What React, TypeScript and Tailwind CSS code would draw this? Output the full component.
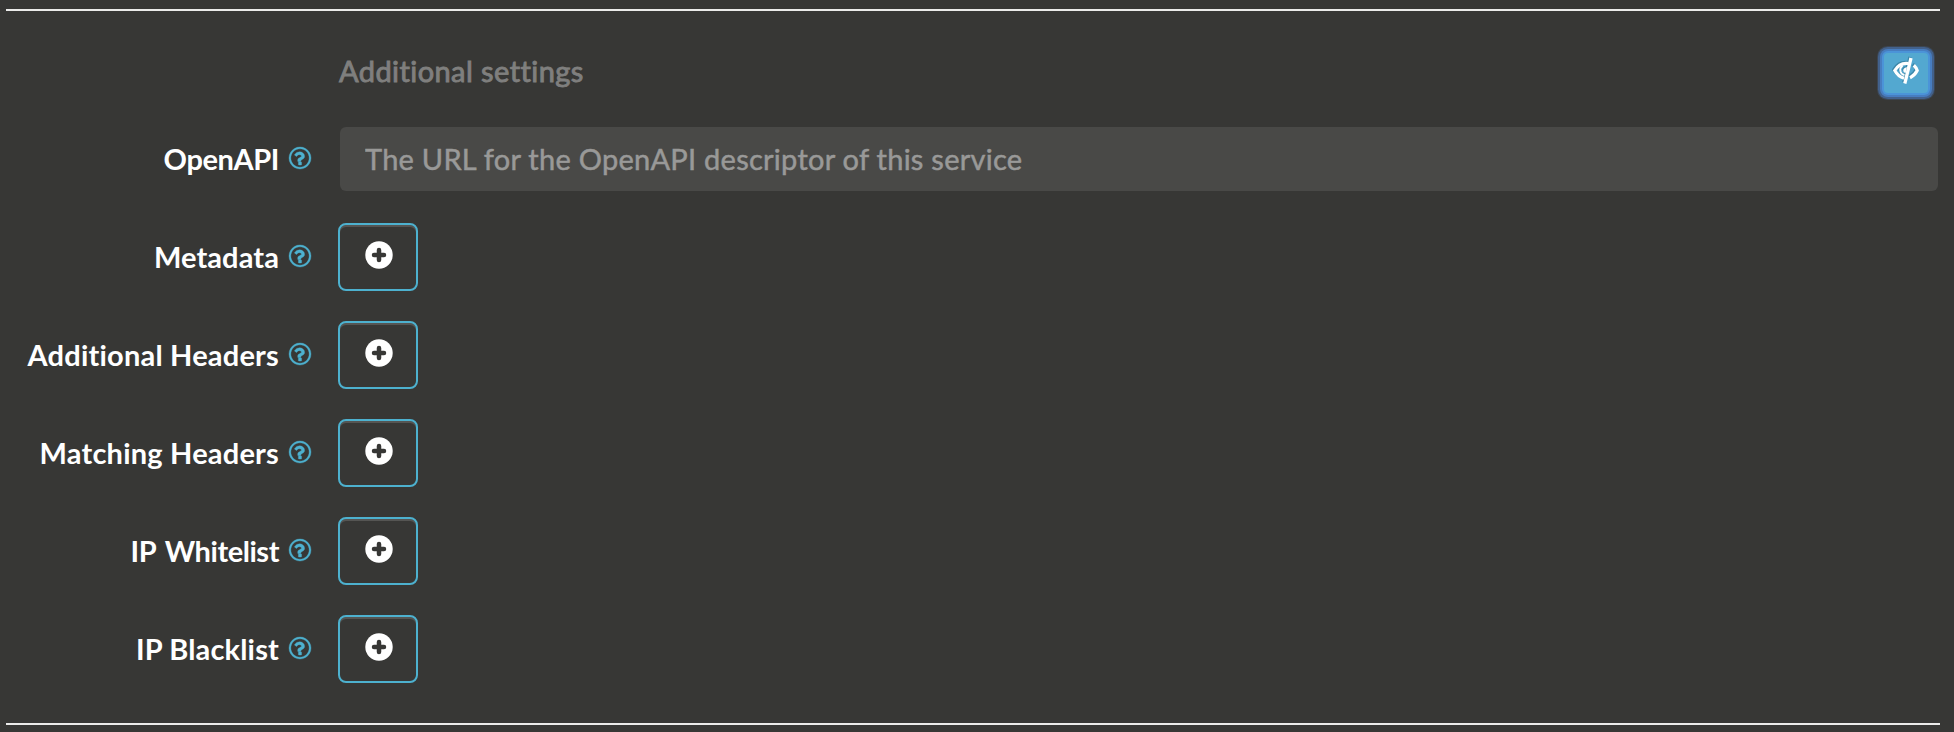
const rows = [
  { label: "Metadata", cls: "tracking-[0.1px]" },
  { label: "Additional Headers", cls: "tracking-[0.2px]" },
  { label: "Matching Headers", cls: "tracking-[0.2px]" },
  { label: "IP Whitelist", cls: "tracking-[-0.45px] [word-spacing:3px]" },
  { label: "IP Blacklist", cls: "tracking-[0.16px]" },
];

function Help() {
  return (
    <svg viewBox="0 0 1536 1536" className="mb-[3px] ml-[10px] h-[22px] w-[22px] shrink-0 overflow-visible fill-[#4db1cf] stroke-[#4db1cf] [stroke-width:24px]">
      <path d="M880 1072v160q0 14-9 23t-23 9h-160q-14 0-23-9t-9-23v-160q0-14 9-23t23-9h160q14 0 23 9t9 23zm208-432q0 50-15 90t-45.500 69-52 44-59.500 36q-32 18-46.500 28t-26 24-11.500 29v32q0 14-9 23t-23 9h-160q-14 0-23-9t-9-23v-68q0-35 10.500-64.500t24-47.500 39-35.500 41-25.500 44.500-21q53-25 75-43t22-49q0-42-43.500-71.500t-95.500-29.500q-56 0-95 27-29 20-80 83-9 12-25 12-11 0-19-6l-108-82q-10-7-12-20t5-23q122-192 349-192 129 0 238.500 89.500t109.500 214.500zm-320-512q-130 0-248.500 51t-204 136.500-136.500 204-51 248.500 51 248.500 136.500 204 204 136.500 248.500 51 248.500-51 204-136.500 136.500-204 51-248.500-51-248.500-136.500-204-204-136.500-248.500-51zm768 640q0 209-103 385.500t-279.500 279.500-385.500 103-385.500-103-279.500-279.500-103-385.500 103-385.500 279.500-279.500 385.500-103 385.500 103 279.500 279.500 103 385.500z" />
    </svg>
  );
}

function Label({ text, cls }: { text: string; cls: string }) {
  return (
    <div className="flex h-full w-[311px] shrink-0 items-center justify-end text-[29px] font-bold text-white">
      <span className={"whitespace-nowrap " + cls}>{text}</span>
      <Help />
    </div>
  );
}

function EyeClosed() {
  return (
    <svg
      viewBox="0 0 26 26"
      className="mb-[4px] h-[26px] w-[26px] overflow-visible drop-shadow-[-1px_-1px_0px_#3b86a8]"
      fill="none"
      stroke="white"
    >
      <path d="M15.500 5.500C9 4.500 4.500 8 1.800 12.500C4 16.500 7 19.200 11 20.200" strokeWidth="3.200" />
      <path d="M9.500 7.500Q6.500 10 7.500 13.500Q8.500 16.500 11.500 17" strokeWidth="2" />
      <path d="M13.500 9.500Q10 10 10.500 13Q11 14.800 12.800 14.500Z" fill="white" strokeWidth="0.500" />
      <path d="M20.800 7.200Q23.300 9.500 24.200 12.500Q22 17 17 19.800" strokeWidth="3.200" />
      <path d="M18 0L11.800 25.500" strokeWidth="3.300" />
    </svg>
  );
}

export default function App() {
  return (
    <div className="h-[732px] w-[1954px] overflow-hidden bg-[#373735] pt-[9px] font-['Lato',sans-serif] text-[29px] leading-[40px]">
      <div className="ml-[6px] h-[2px] w-[1934px] bg-[#ebebea]" />
      <div className="mt-[36px] flex h-[52px] items-center justify-between pr-[26px] pl-[339px]">
        <span className="pb-[4px] tracking-[0.42px] text-[#7f7f7e] [-webkit-text-stroke:0.9px_#7f7f7e]">Additional settings</span>
        <button className="flex h-[40px] w-[44px] items-center justify-center rounded-[4px] bg-[#53a8d0] shadow-[0_0_0_2px_#4b94d8,0_0_0_4px_#477dc0,0_0_0_6px_#42618c,0_0_0_7px_#3c4653]">
          <EyeClosed />
        </button>
      </div>
      <div className="mt-[28px] flex h-[64px] items-center">
        <Label text="OpenAPI" cls="tracking-[-0.4px]" />
        <input
          className="ml-[29px] h-[64px] w-[1598px] rounded-[6px] bg-[#494947] px-[25px] pb-[2px] tracking-[0.26px] placeholder:text-[#999998] [-webkit-text-stroke:0.5px_#999998]"
          placeholder="The URL for the OpenAPI descriptor of this service"
        />
      </div>
      <div className="mt-[32px] flex flex-col gap-[30px]">
        {rows.map((r) => (
          <div key={r.label} className="flex h-[68px] items-center">
            <Label text={r.label} cls={r.cls} />
            <button className="ml-[27px] flex h-[68px] w-[80px] items-center justify-center rounded-[8px] border-2 border-[#4db1cf] pb-[4px] pl-[2px] shadow-[inset_0_2px_0_#555553]">
              <svg viewBox="0 0 28 28" className="h-[28px] w-[28px]">
                <circle cx="14" cy="14" r="13.700" fill="white" />
                <path d="M14 9v10M9 14h10" stroke="#373735" strokeWidth="4.500" strokeLinecap="round" />
              </svg>
            </button>
          </div>
        ))}
      </div>
      <div className="mt-[40px] ml-[6px] h-[2px] w-[1934px] bg-[#ebebea]" />
    </div>
  );
}
